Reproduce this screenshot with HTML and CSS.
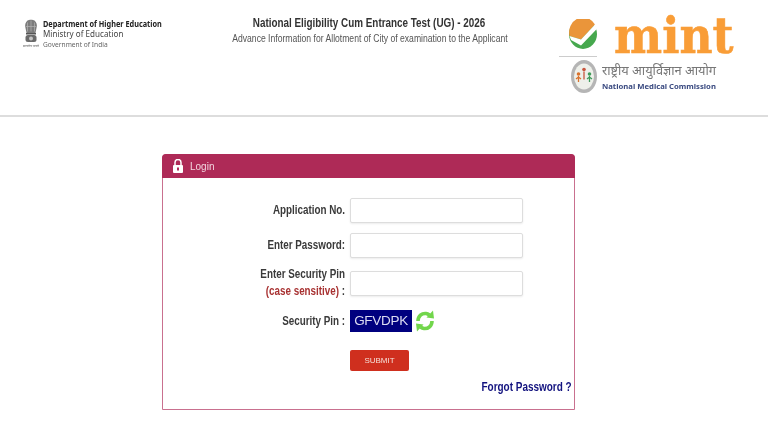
FILE: index.html
```html
<!DOCTYPE html>
<html lang="en">
<head>
<meta charset="utf-8">
<title>NEET (UG) 2026 - Login</title>
<link rel="stylesheet" href="styles.css">
</head>
<body>
<header class="top">
  <div class="dept">
    <svg class="emblem" width="16" height="29" viewBox="0 0 16 29">
      <path d="M2.500 9C1.500 6 2.500 3 4.500 1.500c1.500-1 5.500-1 7 0C13.500 3 14.500 6 13.500 9l-1 5h-9z" fill="#7c7c7c"/>
      <path d="M4.500 3.500v9M8 1.500v11M11.500 3.500v9M3 7.500h10" stroke="#b5b5b5" stroke-width=".7"/>
      <rect x="3" y="14" width="10" height="1.500" fill="#555"/>
      <rect x="2.500" y="16" width="11" height="7" rx="2.500" fill="#6a6a6a"/>
      <circle cx="8" cy="19.500" r="2" fill="#c4c4c4"/>
      <text class="motto" x="0" y="28" textLength="16" lengthAdjust="spacingAndGlyphs" lang="hi">सत्यमेव जयते</text>
    </svg>
    <div class="dept-text">
      <div class="dept-name">Department of Higher Education</div>
      <div class="dept-min">Ministry of Education</div>
      <div class="dept-gov">Government of India</div>
    </div>
  </div>
  <div class="title">
    <h1>National Eligibility Cum Entrance Test (UG) - 2026</h1>
    <p>Advance Information for Allotment of City of examination to the Applicant</p>
  </div>
  <div class="brand">
    <div class="mint-row">
      <div class="tick-cell">
        <svg class="tick" width="28" height="30" viewBox="0 0 28 30">
          <ellipse cx="14" cy="15" rx="14" ry="15" fill="#46a84e"/>
          <path d="M.5 17 12 20.500 26 5.500A14 15 0 0 0 .5 17z" fill="#ea953a"/>
          <path d="M.5 17 12 20.500 26 5.500 27.800 10 12 26.500 2 21z" fill="#fff"/>
        </svg>
      </div>
      <span class="mint">mint</span>
    </div>
    <div class="nmc">
      <svg class="seal" width="26" height="33" viewBox="0 0 26 33">
        <ellipse cx="13" cy="16.500" rx="13" ry="16.500" fill="#b5b5b5"/>
        <ellipse cx="13" cy="16.500" rx="10" ry="13" fill="#eef0ea"/>
        <circle cx="7.500" cy="14" r="1.800" fill="#d9722d"/>
        <path d="M7.500 16v6M5 19l2.500-2 2.500 2" stroke="#d9722d" stroke-width="1.300" fill="none"/>
        <circle cx="13" cy="9.500" r="1.800" fill="#c8553d"/>
        <path d="M13 11.500v8" stroke="#c8553d" stroke-width="1.300"/>
        <circle cx="18.500" cy="14" r="1.800" fill="#3f9c5a"/>
        <path d="M18.500 16v6M16 19l2.500-2 2.500 2" stroke="#3f9c5a" stroke-width="1.300" fill="none"/>
      </svg>
      <div class="nmc-text">
        <div class="nmc-hi" lang="hi">राष्ट्रीय आयुर्विज्ञान आयोग</div>
        <div class="nmc-en">National Medical Commission</div>
      </div>
    </div>
  </div>
</header>

<main class="panel">
  <div class="panel-head">
    <svg class="lock" width="10" height="14" viewBox="0 0 10 14">
      <path d="M2 6V3.500a3 3 0 0 1 6 0V6" fill="none" stroke="#fff" stroke-width="1.500"/>
      <rect x="0" y="6" width="10" height="8" rx="1" fill="#fff"/>
      <rect x="4" y="8.500" width="2" height="3" fill="#ae2a57"/>
    </svg>
    <span>Login</span>
  </div>
  <form class="panel-body">
    <div class="row row-1">
      <label class="lbl" for="app">Application No.</label>
      <input class="field" id="app" type="text">
    </div>
    <div class="row row-2">
      <label class="lbl" for="pwd">Enter Password:</label>
      <input class="field" id="pwd" type="password">
    </div>
    <div class="row row-3">
      <label class="lbl" for="pin">Enter Security Pin<br><span class="hint">(case sensitive)</span> :</label>
      <input class="field" id="pin" type="text">
    </div>
    <div class="row row-4">
      <div class="lbl">Security Pin :</div>
      <div class="captcha">GFVDPK</div>
      <svg class="refresh" width="20" height="24" viewBox="0 0 20 24">
        <path d="M3 12C3 7 7 4 11 4.500c1.500.2 2.500.8 3.500 1.500" fill="none" stroke="#72d64c" stroke-width="3.600"/>
        <path d="M11.500 8.500 19 9.500 18 1.500z" fill="#72d64c"/>
        <path d="M17 12c0 5-4 8-8 7.500-1.500-.2-2.500-.8-3.500-1.500" fill="none" stroke="#72d64c" stroke-width="3.600"/>
        <path d="M8.500 15.500 1 14.500 2 22.500z" fill="#72d64c"/>
      </svg>
    </div>
    <div class="row row-5">
      <button class="submit" type="button">SUBMIT</button>
    </div>
    <div class="forgot-row"><a class="forgot" href="#">Forgot Password ?</a></div>
  </form>
</main>
</body>
</html>
```

FILE: styles.css
```css
* { box-sizing: border-box; }
html, body { margin: 0; padding: 0; background: #fff; }
body { font-family: "Liberation Sans", Arial, sans-serif; color: #333; width: 768px; height: 432px; overflow: hidden; filter: blur(.35px); }

.top { height: 117px; border-bottom: 2px solid #ddd; display: flex; align-items: flex-start; }

.dept { width: 210px; padding: 18px 0 0 23px; display: flex; gap: 4px; }
.emblem { margin-top: 1px; flex: none; }
.motto { font-family: "Noto Sans", sans-serif; font-size: 3.500px; fill: #555; }
.dept-text { font-family: "Noto Sans", sans-serif; white-space: nowrap; }
.dept-name, .dept-min, .dept-gov { transform-origin: left center; }
.dept-name { font-size: 8.500px; font-weight: 700; line-height: 11px; color: #222; transform: scaleX(.86); }
.dept-min { font-size: 9.800px; line-height: 10px; color: #444; transform: scaleX(.825); }
.dept-gov { font-size: 7.800px; line-height: 10px; color: #666; transform: scaleX(.85); }

.title { width: 318px; padding-top: 15px; text-align: center; }
.title h1 { margin: 0; font-size: 12px; line-height: 16px; font-weight: 700; color: #333; white-space: nowrap; transform: scaleX(.823); }
.title p { margin: 0; font-size: 10px; line-height: 16px; color: #555; white-space: nowrap; transform: scaleX(.86); }

.brand { padding: 12px 0 0 31px; width: 240px; }
.mint-row { display: flex; height: 45px; }
.tick-cell { width: 38px; padding: 7px 0 0 10px; border-bottom: 1px solid #ccc; flex: none; }
.tick { display: block; }
.mint { font-family: "DejaVu Serif", serif; font-weight: 700; font-size: 50px; line-height: 48px; height: 45px; color: #f99d37; -webkit-text-stroke: .6px #f99d37; margin-left: 17px; transform: scaleX(.91); transform-origin: left center; }
.nmc { display: flex; gap: 5px; margin: 3px 0 0 12px; }
.seal { flex: none; }
.nmc-text { white-space: nowrap; padding-top: 3px; }
.nmc-hi { font-family: "Noto Sans", "DejaVu Sans", sans-serif; font-size: 12.800px; line-height: 15px; color: #777; }
.nmc-en { font-family: "Noto Sans", sans-serif; font-weight: 700; font-size: 7.700px; line-height: 12px; color: #3a4a80; margin-top: 2px; }

.panel { width: 413px; height: 256px; margin: 37px 0 0 162px; border: 1px solid #c9708f; border-radius: 4px 4px 0 0; }
.panel-head { height: 24px; margin: -1px -1px 0; background: #ae2a57; border-radius: 4px 4px 0 0; color: #f2d5df; font-size: 10px; display: flex; align-items: center; padding-left: 11px; gap: 7px; }
.panel-body { padding: 20px 0 0; }

.row { display: flex; align-items: center; }
.lbl { width: 187px; text-align: right; padding-right: 6px; font-size: 12px; line-height: 17px; font-weight: 700; color: #3a3a3a; flex: none; transform: scaleX(.82); transform-origin: right center; }
.hint { color: #a83232; }
.field { width: 173px; height: 25px; border: 1px solid #ddd; border-radius: 2px; background: #fff; box-shadow: 0 1px 2px rgba(0,0,0,.08); padding: 0; margin: 0; }
.row-2 { margin-top: 10px; }
.row-3 { margin-top: 8px; }
.row-4 { margin-top: 9px; }
.captcha { width: 62px; height: 22px; background: #00007f; color: #dcdcf2; font-size: 13.500px; line-height: 22px; text-align: center; letter-spacing: -.3px; }
.refresh { margin-left: 3px; flex: none; }
.row-5 { margin: 17px 0 0 187px; }
.submit { display: block; width: 59px; height: 21px; border: 0; border-radius: 2px; background: #cf2f1e; color: #f5e0d8; font: 8px "Liberation Sans", sans-serif; padding: 0; }
.forgot-row { text-align: right; padding-right: 2px; margin-top: 8px; line-height: 14px; }
.forgot { display: inline-block; color: #13137f; font-size: 12px; font-weight: 700; text-decoration: none; transform: scaleX(.83); transform-origin: right center; }
```
